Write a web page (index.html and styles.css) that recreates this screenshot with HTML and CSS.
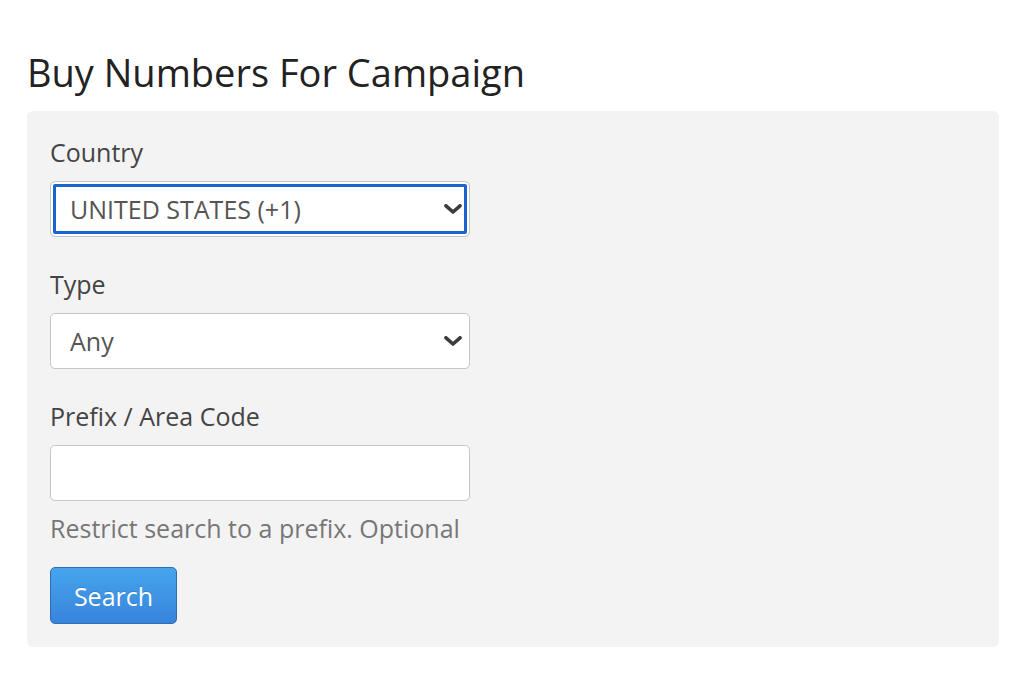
FILE: index.html
```html
<!DOCTYPE html>
<html lang="en">
<head>
<meta charset="UTF-8">
<meta name="viewport" content="width=device-width, initial-scale=1.0">
<title>Buy Numbers For Campaign</title>
<link rel="stylesheet" href="styles.css">
</head>
<body>

<div class="page">
  <h1>Buy Numbers For Campaign</h1>

  <form class="panel" id="buyForm">
    <div class="field">
      <label for="country">Country</label>
      <div class="select-wrap">
        <select id="country" name="country" class="focused">
          <option value="US">UNITED STATES (+1)</option>
          <option value="CA">CANADA (+1)</option>
          <option value="GB">UNITED KINGDOM (+44)</option>
        </select>
        <svg class="chevron" width="18" height="10" viewBox="0 0 18 10"><path d="M2 1.8 L9 8 L16 1.8" fill="none" stroke="#3c3c3c" stroke-width="3.6" stroke-linecap="round" stroke-linejoin="round"/></svg>
      </div>
    </div>

    <div class="field">
      <label for="type">Type</label>
      <div class="select-wrap">
        <select id="type" name="type">
          <option value="any">Any</option>
          <option value="local">Local</option>
          <option value="tollfree">Toll Free</option>
          <option value="mobile">Mobile</option>
        </select>
        <svg class="chevron" width="18" height="10" viewBox="0 0 18 10"><path d="M2 1.8 L9 8 L16 1.8" fill="none" stroke="#3c3c3c" stroke-width="3.6" stroke-linecap="round" stroke-linejoin="round"/></svg>
      </div>
    </div>

    <div class="field">
      <label for="prefix">Prefix / Area Code</label>
      <input type="text" id="prefix" name="prefix">
      <p class="help">Restrict search to a prefix. Optional</p>
    </div>

    <button type="submit" class="btn">Search</button>
  </form>
</div>

</body>
</html>
```

FILE: styles.css
```css
body {
  margin: 0;
  background-color: #fff;
  font-family: "Open Sans", "Liberation Sans", sans-serif;
  color: #333;
}

.page {
  padding: 0 25px 0 27px;
}

h1 {
  margin: 50px 0 17px 0;
  font-size: 38px;
  line-height: 44px;
  font-weight: 400;
  color: #222;
}

.panel {
  background-color: #f3f3f3;
  border-radius: 6px;
  padding: 24px 23px 23px;
}

.field {
  margin-bottom: 30px;
}

label {
  display: block;
  font-size: 25px;
  line-height: 34px;
  margin-bottom: 12px;
  color: #444;
}

.select-wrap {
  position: relative;
  width: 420px;
}

select,
input[type="text"] {
  display: block;
  width: 420px;
  height: 56px;
  box-sizing: border-box;
  padding: 0 40px 0 19px;
  border: 1px solid #c6c6c6;
  border-radius: 5px;
  background-color: #fff;
  font-family: "Open Sans", "Liberation Sans", sans-serif;
  font-size: 25px;
  color: #555;
  -webkit-appearance: none;
  appearance: none;
  outline: none;
}

select.focused {
  box-shadow: inset 0 0 0 2px #fff, inset 0 0 0 5px #1b63d0;
}

.chevron {
  position: absolute;
  right: 8px;
  top: 23px;
  pointer-events: none;
}

.help {
  margin: 10px 0 0;
  font-size: 25px;
  line-height: 34px;
  color: #777;
}

.btn {
  display: block;
  margin-top: -8px;
  width: 127px;
  height: 57px;
  padding: 0;
  border: 1px solid #2f6db4;
  border-radius: 5px;
  background: linear-gradient(#46a4ec, #3884dc);
  color: #fff;
  font-family: "Open Sans", "Liberation Sans", sans-serif;
  font-size: 25px;
  text-shadow: 0 -1px 0 rgba(0, 0, 0, 0.15);
  cursor: pointer;
}
```
